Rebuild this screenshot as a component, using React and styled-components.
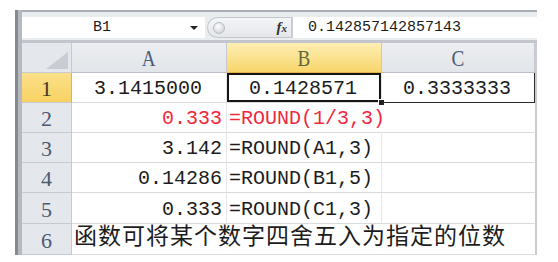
import React from "react";
import styled, { createGlobalStyle } from "styled-components";

// 表格数据
const columns = ["A", "B", "C"];

const rows = [
  {
    n: 1,
    height: 30,
    cells: [
      { v: "3.1415000", align: "center" },
      { v: "0.1428571", align: "center", selected: true },
      { v: "0.3333333", align: "center", boxed: true },
    ],
  },
  {
    n: 2,
    height: 30,
    cells: [
      { v: "0.333", align: "right", red: true },
      { v: "=ROUND(1/3,3)", red: true, spill: true },
      { v: "" },
    ],
  },
  { n: 3, height: 30, cells: [{ v: "3.142", align: "right" }, { v: "=ROUND(A1,3)" }, { v: "" }] },
  { n: 4, height: 30, cells: [{ v: "0.14286", align: "right" }, { v: "=ROUND(B1,5)" }, { v: "" }] },
  { n: 5, height: 31, cells: [{ v: "0.333", align: "right" }, { v: "=ROUND(C1,3)" }, { v: "" }] },
  {
    n: 6,
    height: 31,
    cells: [
      { v: "函数可将某个数字四舍五入为指定的位数", cjk: true, spill: true },
      { v: "", spill: true },
      { v: "" },
    ],
  },
];

export default function App() {
  return (
    <>
      <GlobalStyle />
      <Frame>
        <Window>
          {/* 编辑栏 */}
          <FormulaBar>
            <NameBox>
              <NameText>B1</NameText>
              <Caret />
            </NameBox>
            <Splitter>
              <Knob />
              <Fx>
                f<small>x</small>
              </Fx>
            </Splitter>
            <FormulaInput>0.142857142857143</FormulaInput>
          </FormulaBar>

          {/* 工作表 */}
          <Sheet $rows={rows.map((r) => r.height)}>
            <Corner>
              <svg width="22" height="17" viewBox="0 0 22 17">
                <polygon points="22,0 22,17 0,17" fill="#c9cdd3" />
              </svg>
            </Corner>
            {columns.map((c) => (
              <ColHeader key={c} $active={c === "B"}>
                <HeaderLabel>{c}</HeaderLabel>
              </ColHeader>
            ))}

            {rows.map((row) => (
              <React.Fragment key={row.n}>
                <RowHeader $active={row.n === 1}>{row.n}</RowHeader>
                {row.cells.map((cell, i) => (
                  <Cell
                    key={i}
                    $align={cell.align}
                    $red={cell.red}
                    $cjk={cell.cjk}
                    $spill={cell.spill}
                    $boxed={cell.boxed}
                    $selected={cell.selected}
                    $last={i === row.cells.length - 1}
                  >
                    <span>{cell.v}</span>
                    {cell.selected && <FillHandle />}
                  </Cell>
                ))}
              </React.Fragment>
            ))}
          </Sheet>
        </Window>
      </Frame>
    </>
  );
}

/* ====================================================== */

const GlobalStyle = createGlobalStyle`
  html, body {
    margin: 0;
    padding: 0;
    background: #ffffff;
  }
  body {
    font-family: "Liberation Mono", "Noto Sans CJK SC", monospace;
    color: #1c1c1c;
  }
`;

const Frame = styled.div`
  margin: 10px 0 0 15px;
  width: 522px;
  display: flex;
  border-left: 3px solid #858a91;
  box-sizing: border-box;
`;

const Window = styled.div`
  flex: 1;
  display: flex;
  flex-direction: column;
  border-left: 4px solid #b6bac0;
`;

/* ---------- 编辑栏 ---------- */

const FormulaBar = styled.div`
  height: 33px;
  box-sizing: border-box;
  display: flex;
  padding: 5px 0 2px;
  background: #eaedf0;
  border-top: 2px solid #a9adb3;
  border-bottom: 3px solid #c2c6cc;
`;

const NameBox = styled.div`
  width: 183px;
  display: flex;
  align-items: center;
  background: #ffffff;
`;

const NameText = styled.span`
  flex: 1;
  text-align: center;
  font-size: 15px;
  padding-right: 8px;
`;

const Caret = styled.span`
  width: 0;
  height: 0;
  margin-right: 7px;
  border-left: 4px solid transparent;
  border-right: 4px solid transparent;
  border-top: 4px solid #222;
`;

const Splitter = styled.div`
  width: 86px;
  margin-left: 2px;
  display: flex;
  align-items: center;
  padding: 0 4px 0 5px;
  box-sizing: border-box;
  border: 1px solid #c3c7cd;
  border-right: 2px solid #c9cdd2;
  border-radius: 11px 0 0 11px;
  background: linear-gradient(#f4f5f7, #e4e6ea);
`;

const Knob = styled.span`
  width: 10px;
  height: 10px;
  border-radius: 50%;
  background: radial-gradient(circle at 40% 35%, #ffffff, #c4c8ce);
  border: 1px solid #b8bcc2;
`;

const Fx = styled.span`
  margin-left: auto;
  font-family: "Liberation Serif", serif;
  font-style: italic;
  font-weight: bold;
  font-size: 15px;
  color: #333;

  small {
    font-size: 11px;
  }
`;

const FormulaInput = styled.div`
  flex: 1;
  display: flex;
  align-items: center;
  padding-left: 15px;
  font-size: 15px;
  background: #ffffff;
`;

/* ---------- 工作表 ---------- */

const Sheet = styled.div`
  display: grid;
  grid-template-columns: 50px 155px 155px 153px;
  grid-template-rows: 30px ${(p) => p.$rows.map((h) => `${h}px`).join(" ")};
  border-right: 2px solid #c9ccd1;
  background: #ffffff;
`;

const headerBase = `
  box-sizing: border-box;
  display: flex;
  justify-content: center;
  border-right: 1px solid #c6cad0;
  border-bottom: 1px solid #c6cad0;
  color: #4c5a74;
`;

const Corner = styled.div`
  ${headerBase}
  justify-content: flex-end;
  align-items: flex-end;
  padding: 0 3px 3px 0;
  background: #e4e7eb;
`;

const ColHeader = styled.div`
  ${headerBase}
  align-items: flex-end;
  padding-bottom: 2px;
  background: ${(p) =>
    p.$active
      ? "linear-gradient(#fdeeb4, #f9d66b)"
      : "linear-gradient(#eceef1, #e2e5e9)"};
  border-bottom-color: ${(p) => (p.$active ? "#e2b44a" : "#b9bec6")};
  color: ${(p) => (p.$active ? "#5d6a40" : "#4c5a74")};
`;

const HeaderLabel = styled.span`
  font-family: "Liberation Serif", serif;
  font-size: 24px;
  line-height: 24px;
  display: inline-block;
  transform: scaleX(0.8);
`;

const RowHeader = styled.div`
  ${headerBase}
  align-items: flex-end;
  padding-bottom: 2px;
  font-family: "Liberation Serif", serif;
  font-size: 22px;
  line-height: 22px;
  background: ${(p) =>
    p.$active ? "linear-gradient(#fbe08a, #f8d262)" : "#e4e7eb"};
  border-right-color: ${(p) => (p.$active ? "#e2b44a" : "#c6cad0")};
  color: ${(p) => (p.$active ? "#3f3a2a" : "#4c5a74")};
`;

const Cell = styled.div`
  position: relative;
  box-sizing: border-box;
  display: flex;
  align-items: flex-end;
  justify-content: ${(p) =>
    p.$align === "center" ? "center" : p.$align === "right" ? "flex-end" : "flex-start"};
  padding: 0 4px 3px 2px;
  white-space: nowrap;
  font-size: ${(p) => (p.$cjk ? "23px" : "20px")};
  letter-spacing: ${(p) => (p.$cjk ? "1px" : "0")};
  line-height: ${(p) => (p.$cjk ? "26px" : "20px")};
  color: ${(p) => (p.$red ? "#f0283c" : "#1c1c1c")};
  border-bottom: 1px solid ${(p) => (p.$boxed ? "#2a2a2a" : "#d8dadd")};
  border-right: 1px solid
    ${(p) =>
      p.$boxed ? "#2a2a2a" : p.$spill || p.$last ? "transparent" : "#e4e6e9"};
  box-shadow: ${(p) => (p.$selected ? "inset 0 0 0 2px #151515" : "none")};
  z-index: ${(p) => (p.$spill ? 1 : 0)};
`;

const FillHandle = styled.span`
  position: absolute;
  right: -4px;
  bottom: -4px;
  width: 5px;
  height: 5px;
  background: #222;
  border: 1px solid #ffffff;
  z-index: 2;
`;
